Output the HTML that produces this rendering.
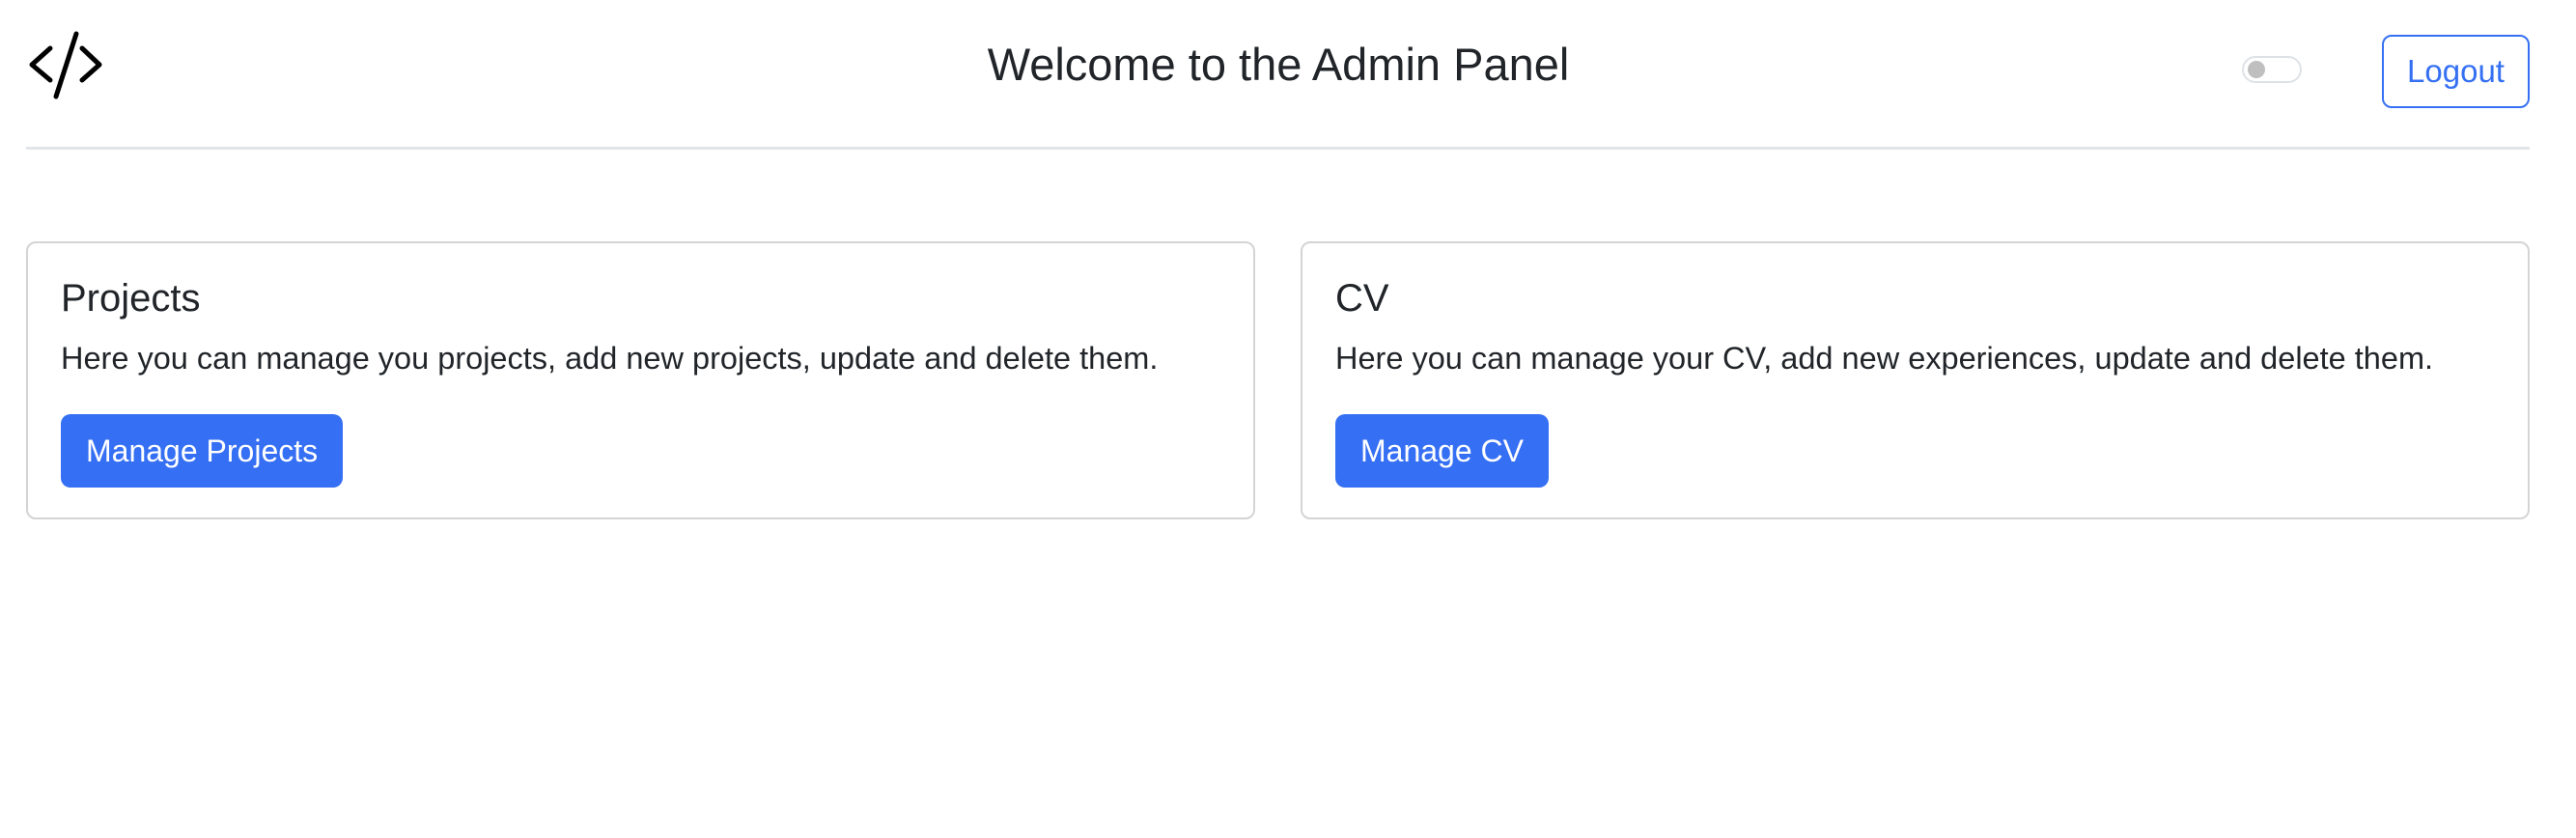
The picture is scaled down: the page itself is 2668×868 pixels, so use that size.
<!DOCTYPE html>
<html><head><meta charset="utf-8"><style>
body{margin:0;width:2668px;height:868px;background:#fff;font-family:"Liberation Sans",sans-serif;color:#212529;position:relative;overflow:hidden}
.abs{position:absolute}
h1{position:absolute;margin:0;left:0;width:2648px;text-align:center;top:38px;font-size:47px;font-weight:500;line-height:58px}
.toggle{left:2322px;top:58px;width:62px;height:28px;border:2px solid #dee2e6;border-radius:16px;box-sizing:border-box}
.toggle:after{content:"";position:absolute;left:4px;top:3px;width:18px;height:18px;border-radius:50%;background:#bfbfbf}
.logout{left:2467px;top:36px;width:153px;height:76px;border:2px solid #3570f3;border-radius:10px;box-sizing:border-box;color:#3570f3;font-size:33px;line-height:72px;text-align:center}
.hr{left:27px;top:152px;width:2593px;height:3px;background:#e1e4e8}
.card{top:250px;width:1273px;height:288px;border:2px solid #d4d4d4;border-radius:10px;box-sizing:border-box}
.card h5{position:absolute;margin:0;left:34px;top:34px;font-size:40px;font-weight:500;line-height:46px}
.card p{position:absolute;margin:0;left:34px;top:100px;font-size:32.5px;line-height:38px;white-space:nowrap}
.btn{position:absolute;left:34px;top:177px;height:76px;background:#356ff3;color:#fff;border-radius:10px;font-size:32px;line-height:76px;padding:0 26px}
</style></head><body>
<svg class="abs" style="left:0;top:0" width="120" height="120"><g fill="none" stroke="#000" stroke-width="5" stroke-linecap="round" stroke-linejoin="round"><path d="M52 50 L33 67 L52 83"/><path d="M79 35 L58 100"/><path d="M85 50 L103 67 L85 83"/></g></svg>
<h1>Welcome to the Admin Panel</h1>
<div class="abs toggle"></div>
<div class="abs logout">Logout</div>
<div class="abs hr"></div>
<div class="abs card" style="left:27px"><h5>Projects</h5><p>Here you can manage you projects, add new projects, update and delete them.</p><div class="btn">Manage Projects</div></div>
<div class="abs card" style="left:1347px"><h5>CV</h5><p>Here you can manage your CV, add new experiences, update and delete them.</p><div class="btn">Manage CV</div></div>
</body></html>
